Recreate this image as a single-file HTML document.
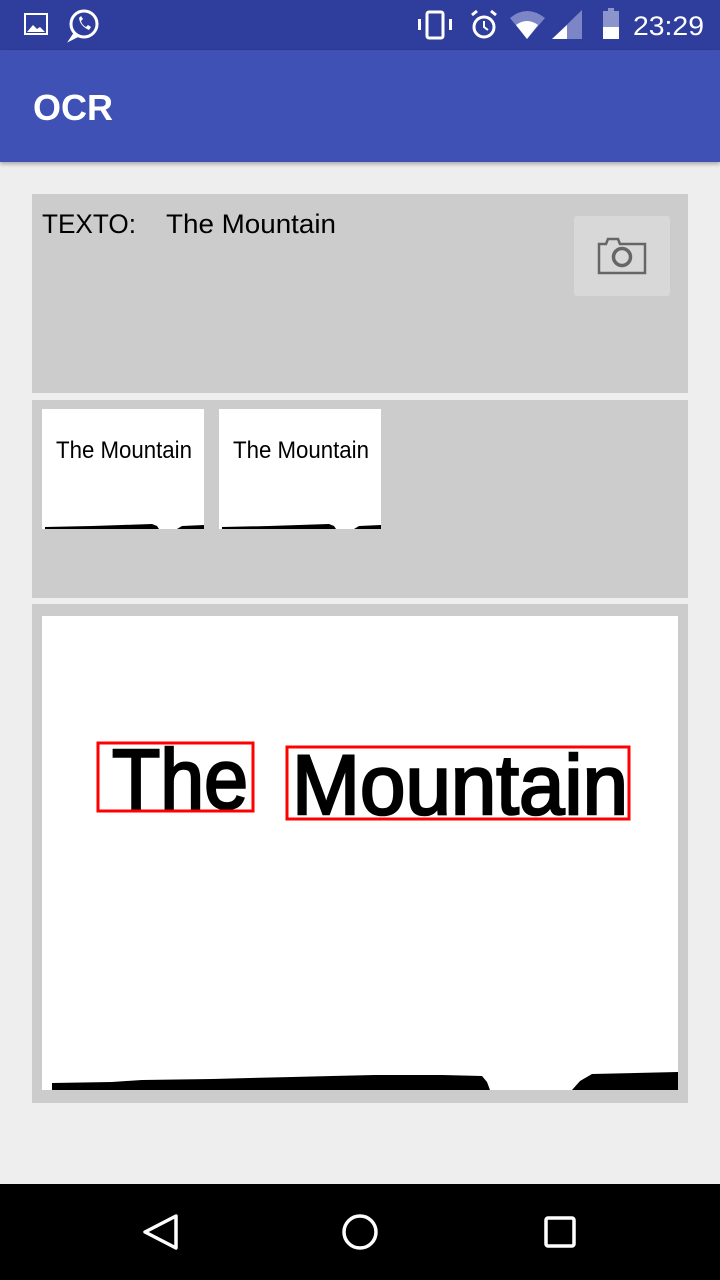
<!DOCTYPE html>
<html><head><meta charset="utf-8"><style>
*{margin:0;padding:0;box-sizing:border-box}
body{width:720px;height:1280px;background:#eeeeee;position:relative;overflow:hidden;font-family:"Liberation Sans",sans-serif}
.abs{position:absolute}
</style></head><body>
<div class="abs" style="left:0;top:0;width:720px;height:50px;background:#2f3d9c"></div>
<svg class="abs" style="left:0;top:0" width="720" height="50">
 <rect x="25" y="14" width="22" height="20" fill="none" stroke="#fff" stroke-width="2"/>
 <path d="M27 32 L33 25 L37 29 L40 27 L45 32 Z" fill="#fff"/>
 <circle cx="84" cy="24" r="13" fill="none" stroke="#fff" stroke-width="3"/>
 <path d="M74 34 L70 40 L78 36" fill="#fff" stroke="#fff" stroke-width="2"/>
 <path d="M79 18 Q80 26 89 30 L91 27 L88 25 L86 27 Q82 25 81 21 L83 19 L81 16 Z" fill="#fff"/>
 <rect x="427" y="12" width="16" height="26" rx="2" fill="none" stroke="#fff" stroke-width="3"/>
 <rect x="418" y="19" width="3" height="11" fill="#fff"/><rect x="449" y="19" width="3" height="11" fill="#fff"/>
 <circle cx="484" cy="27" r="10" fill="none" stroke="#fff" stroke-width="3"/>
 <path d="M484 21 V27 L488 30" stroke="#fff" stroke-width="2" fill="none"/>
 <path d="M472 15 L477 11 M496 15 L491 11" stroke="#fff" stroke-width="3"/>
 <path d="M510 18 Q527 4 545 18 L527 39 Z" fill="#7c86c6"/>
 <path d="M516 25 Q527 17 538 25 L527 39 Z" fill="#fff"/>
 <path d="M552 39 L582 10 V39 Z" fill="#7c86c6"/>
 <path d="M552 39 L567 25 V39 Z" fill="#fff"/>
 <rect x="603" y="11" width="16" height="28" fill="#8c94cc"/>
 <rect x="608" y="8" width="6" height="4" fill="#8c94cc"/>
 <rect x="603" y="27" width="16" height="12" fill="#fff"/>
 <text x="633" y="35" font-size="27" fill="#fff" font-family="Liberation Sans" textLength="71" lengthAdjust="spacingAndGlyphs">23:29</text>
</svg>
<div class="abs" style="left:0;top:50px;width:720px;height:112px;background:#3f51b5;box-shadow:0 2px 4px rgba(0,0,0,.3)"></div>
<div class="abs" style="left:33px;top:87px;color:#fff;font-size:36px;font-weight:bold">OCR</div>

<div class="abs" style="left:32px;top:194px;width:656px;height:199px;background:#cccccc"></div>
<svg class="abs" style="left:32px;top:194px" width="400" height="60">
 <text x="10" y="39" font-size="27" font-family="Liberation Sans" textLength="94" lengthAdjust="spacingAndGlyphs">TEXTO:</text>
 <text x="134" y="39" font-size="27" font-family="Liberation Sans" textLength="170" lengthAdjust="spacingAndGlyphs">The Mountain</text>
</svg>
<div class="abs" style="left:574px;top:216px;width:96px;height:80px;background:#d8d8d8;border-radius:3px"></div>
<svg class="abs" style="left:596px;top:234px" width="54" height="44">
 <path d="M3 10 H10 L12 5 H22 L24 10 H49 V39 H3 Z" fill="none" stroke="#666" stroke-width="2.5"/>
 <circle cx="26" cy="23" r="8.5" fill="none" stroke="#666" stroke-width="3.5"/>
</svg>

<div class="abs" style="left:32px;top:400px;width:656px;height:198px;background:#cccccc"></div>
<svg class="abs" style="left:42px;top:409px" width="162" height="120">
 <rect width="162" height="120" fill="#fff"/>
 <text x="14" y="49" font-size="24" font-family="Liberation Sans" textLength="136" lengthAdjust="spacingAndGlyphs">The Mountain</text>
 <path d="M3 120 L3 118 L50 117 L80 116 L110 115 L115 117 L117 120 Z M135 120 L140 117 L162 116 V120 Z" fill="#000"/>
</svg>
<svg class="abs" style="left:219px;top:409px" width="162" height="120">
 <rect width="162" height="120" fill="#fff"/>
 <text x="14" y="49" font-size="24" font-family="Liberation Sans" textLength="136" lengthAdjust="spacingAndGlyphs">The Mountain</text>
 <path d="M3 120 L3 118 L50 117 L80 116 L110 115 L115 117 L117 120 Z M135 120 L140 117 L162 116 V120 Z" fill="#000"/>
</svg>

<div class="abs" style="left:32px;top:604px;width:656px;height:499px;background:#cccccc"></div>
<svg class="abs" style="left:42px;top:616px" width="636" height="474">
 <rect width="636" height="474" fill="#fff"/>
 <text x="70" y="192" font-size="84" font-family="Liberation Sans" stroke="#000" stroke-width="2.5" textLength="136" lengthAdjust="spacingAndGlyphs">The</text>
 <text x="250" y="198" font-size="84" font-family="Liberation Sans" stroke="#000" stroke-width="2.5" textLength="336" lengthAdjust="spacingAndGlyphs">Mountain</text>
 <rect x="56" y="127" width="155" height="68" fill="none" stroke="#f00" stroke-width="3"/>
 <rect x="245" y="131" width="342" height="72" fill="none" stroke="#f00" stroke-width="3"/>
 <path d="M10 474 V467 L70 466 L100 464 L170 463 L208 462 L250 461 L290 460 L333 459 L400 459 L440 460 L445 466 L448 474 Z M530 474 L538 465 L550 458 L636 456 V474 Z" fill="#000"/>
</svg>

<div class="abs" style="left:0;top:1184px;width:720px;height:96px;background:#000"></div>
<svg class="abs" style="left:0;top:1184px" width="720" height="96">
 <path d="M176 32 L145 48 L176 64 Z" fill="none" stroke="#fff" stroke-width="3.5" stroke-linejoin="round"/>
 <circle cx="360" cy="48" r="16" fill="none" stroke="#fff" stroke-width="3.5"/>
 <rect x="546" y="34" width="28" height="28" rx="2" fill="none" stroke="#fff" stroke-width="3.5"/>
</svg>
</body></html>
